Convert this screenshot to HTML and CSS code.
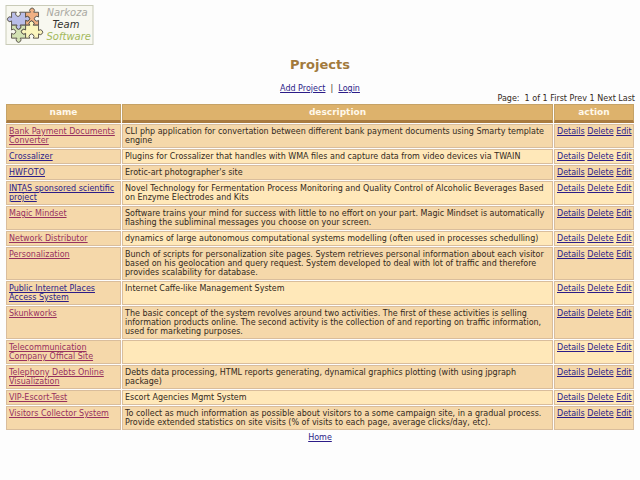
FILE: index.html
```
<!DOCTYPE html>
<html lang="en">
<head>
<meta charset="utf-8">
<title>Projects</title>
<link rel="stylesheet" href="styles.css">
</head>
<body>
<header>
<svg class="logo" viewBox="0 0 88 40" role="img" aria-label="Narkoza Team Software">
<rect x=".5" y=".5" width="87" height="39" fill="#f8f8f0" stroke="#c9cbb8"/>
<g stroke="#5b554c" stroke-width=".9" stroke-linejoin="round" transform="translate(-1.500 -2.500) scale(1.080)">
<path fill="#b9bde8" d="M7 9h4.500a2.200 2.200 0 1 0 3 0H20v4.500a2.200 2.200 0 1 1 0 3V21H15a2.200 2.200 0 1 1-3 0H7v-4a2.200 2.200 0 1 1 0-3z"/>
<path fill="#f0b083" d="M20 9h4.500a2.200 2.200 0 1 1 3 0H32v4.500a2.200 2.200 0 1 0 0 3V21H27a2.200 2.200 0 1 0-3 0H20V16.500a2.200 2.200 0 1 0 0-3z"/>
<path fill="#d3e2b4" d="M7 21h5a2.200 2.200 0 1 0 3 0H20v4.500a2.200 2.200 0 1 0 0 3V33H15a2.200 2.200 0 1 1-3 0H7v-4.500a2.200 2.200 0 1 0 0-3z"/>
<path fill="#fbf5bd" d="M20 21h4a2.200 2.200 0 1 1 3 0H32v5a2.200 2.200 0 1 1 0 3V33H27a2.200 2.200 0 1 0-3 0H20V28.500a2.200 2.200 0 1 1 0-3z"/>
</g>
<g class="logo-text">
<text x="41" y="11" fill="#aaa9a2">Narkoza</text>
<text x="47" y="23" fill="#33332e">Team</text>
<text x="41" y="35" fill="#a3b85c">Software</text>
</g>
</svg>
</header>
<main>
<h1>Projects</h1>
<nav class="menu"><a href="#">Add Project</a> &nbsp;|&nbsp; <a href="#">Login</a></nav>
<p class="pager">Page: &nbsp;1 of 1 First Prev 1 Next Last</p>
<table>
<colgroup><col class="col-name"><col><col class="col-action"></colgroup>
<thead><tr><th scope="col">name</th><th scope="col">description</th><th scope="col">action</th></tr></thead>
<tbody>
<tr><td><a class="visited" href="#">Bank Payment Documents Converter</a></td><td>CLI php application for convertation between different bank payment documents using Smarty template engine</td><td><a href="#">Details</a> <a href="#">Delete</a> <a href="#">Edit</a></td></tr>
<tr><td><a href="#">Crossalizer</a></td><td>Plugins for Crossalizer that handles with WMA files and capture data from video devices via TWAIN</td><td><a href="#">Details</a> <a href="#">Delete</a> <a href="#">Edit</a></td></tr>
<tr><td><a href="#">HWFOTO</a></td><td>Erotic-art photographer's site</td><td><a href="#">Details</a> <a href="#">Delete</a> <a href="#">Edit</a></td></tr>
<tr><td><a href="#">INTAS sponsored scientific project</a></td><td>Novel Technology for Fermentation Process Monitoring and Quality Control of Alcoholic Beverages Based on Enzyme Electrodes and Kits</td><td><a href="#">Details</a> <a href="#">Delete</a> <a href="#">Edit</a></td></tr>
<tr><td><a class="visited" href="#">Magic Mindset</a></td><td>Software trains your mind for success with little to no effort on your part. Magic Mindset is automatically flashing the subliminal messages you choose on your screen.</td><td><a href="#">Details</a> <a href="#">Delete</a> <a href="#">Edit</a></td></tr>
<tr><td><a class="visited" href="#">Network Distributor</a></td><td>dynamics of large autonomous computational systems modelling (often used in processes schedulling)</td><td><a href="#">Details</a> <a href="#">Delete</a> <a href="#">Edit</a></td></tr>
<tr><td><a class="visited" href="#">Personalization</a></td><td>Bunch of scripts for personalization site pages. System retrieves personal information about each visitor based on his geolocation and query request. System developed to deal with lot of traffic and therefore provides scalability for database.</td><td><a href="#">Details</a> <a href="#">Delete</a> <a href="#">Edit</a></td></tr>
<tr><td><a href="#">Public Internet Places<br>Access System</a></td><td>Internet Caffe-like Management System</td><td><a href="#">Details</a> <a href="#">Delete</a> <a href="#">Edit</a></td></tr>
<tr><td><a class="visited" href="#">Skunkworks</a></td><td>The basic concept of the system revolves around two activities. The first of these activities is selling<br>information products online. The second activity is the collection of and reporting on traffic information, used for marketing purposes.</td><td><a href="#">Details</a> <a href="#">Delete</a> <a href="#">Edit</a></td></tr>
<tr><td><a class="visited" href="#">Telecommunication<br>Company Offical Site</a></td><td></td><td><a href="#">Details</a> <a href="#">Delete</a> <a href="#">Edit</a></td></tr>
<tr><td><a class="visited" href="#">Telephony Debts Online Visualization</a></td><td>Debts data processing, HTML reports generating, dynamical graphics plotting (with using jpgraph package)</td><td><a href="#">Details</a> <a href="#">Delete</a> <a href="#">Edit</a></td></tr>
<tr><td><a class="visited" href="#">VIP-Escort-Test</a></td><td>Escort Agencies Mgmt System</td><td><a href="#">Details</a> <a href="#">Delete</a> <a href="#">Edit</a></td></tr>
<tr><td><a class="visited" href="#">Visitors Collector System</a></td><td>To collect as much information as possible about visitors to a some campaign site, in a gradual process.<br>Provide extended statistics on site visits (% of visits to each page, average clicks/day, etc).</td><td><a href="#">Details</a> <a href="#">Delete</a> <a href="#">Edit</a></td></tr>
</tbody>
</table>
</main>
<footer><a href="#">Home</a></footer>
</body>
</html>
```
FILE: styles.css
```
body {
  margin: 0;
  padding: 5px 5px 8px;
  background: #fdfdfd;
  color: #33291c;
  font: 8px/9px Verdana, "DejaVu Sans", sans-serif;
}
a { color: #2c1c88; }
a.visited { color: #97305f; }
.logo { display: block; width: 89px; height: 40px; }
.logo-text { font: italic 200 10px "DejaVu Sans", sans-serif; }
h1 {
  margin: 12px 0 11px;
  color: #a27a3c;
  font-size: 13px;
  line-height: 16px;
  text-align: center;
}
.menu, footer { text-align: center; }
.pager { margin: 1px 0 0; text-align: right; }
table {
  width: 100%;
  table-layout: fixed;
  border-spacing: 1px;
}
.col-name { width: 115px; }
.col-action { width: 80px; }
th {
  height: 15px;
  padding: 0 2px;
  border: 1px solid #c5a266;
  border-bottom: 3px solid #a97b40;
  background: #ddb26c;
  color: #fff8ea;
  font-size: 9px;
  line-height: 17px;
}
td {
  height: 9px;
  padding: 2px;
  border: 1px solid #d9bd9c;
  background: #f5d8aa;
  vertical-align: top;
}
th { height: 15px; line-height: 15px; }
tr:nth-child(even) td + td { background: #ffe8b9; }
td:last-child { white-space: nowrap; }
footer { margin-top: 2px; }
```
